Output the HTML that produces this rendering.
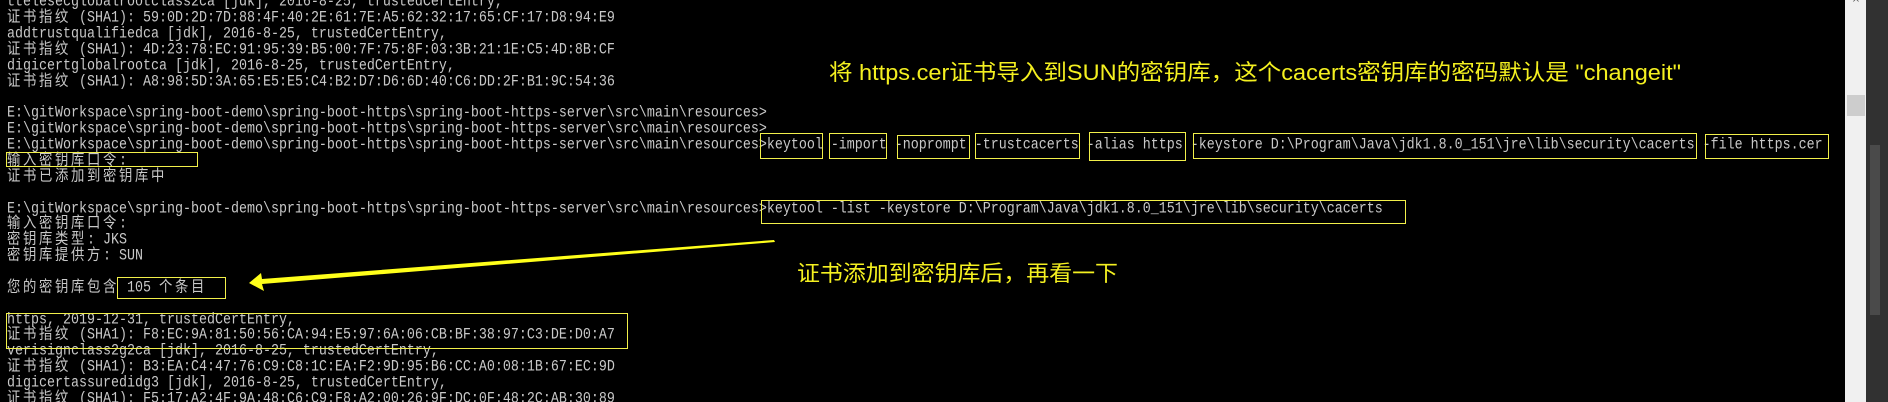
<!DOCTYPE html>
<html><head><meta charset="utf-8"><style>
html,body{margin:0;padding:0;background:#000;width:1888px;height:402px;overflow:hidden;position:relative}
.l{position:absolute;left:7px;height:15.86px;line-height:15.86px;font-family:"Liberation Mono","Noto Sans CJK SC",monospace;font-size:13.33px;color:#c8c8c8;white-space:pre;overflow:visible;transform:scaleY(1.15);transform-origin:50% 50%}
.c{font-family:"Noto Sans CJK SC","WenQuanYi Zen Hei",sans-serif;letter-spacing:2.67px;line-height:0;vertical-align:baseline}
.b{position:absolute;border:1.5px solid #f2f04a;box-sizing:border-box}
</style></head><body>
<div class="l" style="top:-4.6px">ttelesecglobalrootclass2ca [jdk], 2016-8-25, trustedCertEntry,</div>
<div class="l" style="top:11.26px"><span class="c">证书指纹</span> (SHA1): 59:0D:2D:7D:88:4F:40:2E:61:7E:A5:62:32:17:65:CF:17:D8:94:E9</div>
<div class="l" style="top:27.12px">addtrustqualifiedca [jdk], 2016-8-25, trustedCertEntry,</div>
<div class="l" style="top:42.98px"><span class="c">证书指纹</span> (SHA1): 4D:23:78:EC:91:95:39:B5:00:7F:75:8F:03:3B:21:1E:C5:4D:8B:CF</div>
<div class="l" style="top:58.84px">digicertglobalrootca [jdk], 2016-8-25, trustedCertEntry,</div>
<div class="l" style="top:74.7px"><span class="c">证书指纹</span> (SHA1): A8:98:5D:3A:65:E5:E5:C4:B2:D7:D6:6D:40:C6:DD:2F:B1:9C:54:36</div>
<div class="l" style="top:106.42px">E:\gitWorkspace\spring-boot-demo\spring-boot-https\spring-boot-https-server\src\main\resources&gt;</div>
<div class="l" style="top:122.28px">E:\gitWorkspace\spring-boot-demo\spring-boot-https\spring-boot-https-server\src\main\resources&gt;</div>
<div class="l" style="top:138.14px">E:\gitWorkspace\spring-boot-demo\spring-boot-https\spring-boot-https-server\src\main\resources&gt;keytool -import -noprompt -trustcacerts -alias https -keystore D:\Program\Java\jdk1.8.0_151\jre\lib\security\cacerts -file https.cer</div>
<div class="l" style="top:154px"><span class="c">输入密钥库口令</span>:</div>
<div class="l" style="top:169.86px"><span class="c">证书已添加到密钥库中</span></div>
<div class="l" style="top:201.58px">E:\gitWorkspace\spring-boot-demo\spring-boot-https\spring-boot-https-server\src\main\resources&gt;keytool -list -keystore D:\Program\Java\jdk1.8.0_151\jre\lib\security\cacerts</div>
<div class="l" style="top:217.44px"><span class="c">输入密钥库口令</span>:</div>
<div class="l" style="top:233.3px"><span class="c">密钥库类型</span>: JKS</div>
<div class="l" style="top:249.16px"><span class="c">密钥库提供方</span>: SUN</div>
<div class="l" style="top:280.88px"><span class="c">您的密钥库包含</span> 105 <span class="c">个条目</span></div>
<div class="l" style="top:312.6px">https, 2019-12-31, trustedCertEntry,</div>
<div class="l" style="top:328.46px"><span class="c">证书指纹</span> (SHA1): F8:EC:9A:81:50:56:CA:94:E5:97:6A:06:CB:BF:38:97:C3:DE:D0:A7</div>
<div class="l" style="top:344.32px">verisignclass2g2ca [jdk], 2016-8-25, trustedCertEntry,</div>
<div class="l" style="top:360.18px"><span class="c">证书指纹</span> (SHA1): B3:EA:C4:47:76:C9:C8:1C:EA:F2:9D:95:B6:CC:A0:08:1B:67:EC:9D</div>
<div class="l" style="top:376.04px">digicertassuredidg3 [jdk], 2016-8-25, trustedCertEntry,</div>
<div class="l" style="top:391.9px"><span class="c">证书指纹</span> (SHA1): F5:17:A2:4F:9A:48:C6:C9:F8:A2:00:26:9F:DC:0F:48:2C:AB:30:89</div>

<div class="b" style="left:760px;top:133px;width:63px;height:26px"></div>
<div class="b" style="left:829px;top:133px;width:58px;height:26px"></div>
<div class="b" style="left:897px;top:135px;width:73px;height:24px"></div>
<div class="b" style="left:975px;top:133px;width:105px;height:26px"></div>
<div class="b" style="left:1089px;top:132px;width:97px;height:29px"></div>
<div class="b" style="left:1193px;top:133px;width:504px;height:26px"></div>
<div class="b" style="left:1705px;top:134px;width:124px;height:25px"></div>
<div class="b" style="left:761px;top:200px;width:645px;height:24px"></div>
<div class="b" style="left:6px;top:152px;width:192px;height:15px"></div>
<div class="b" style="left:117px;top:277px;width:109px;height:22px"></div>
<div class="b" style="left:6px;top:313px;width:622px;height:36px"></div>

<svg style="position:absolute;left:0;top:0" width="1888" height="402">
<polygon points="774,240 775,242 262,284 264,291 249,283 261,273 262,279" fill="#ffff1a"/>
<text x="829" y="80" textLength="852" lengthAdjust="spacingAndGlyphs" font-family="Liberation Sans, Noto Sans CJK SC, sans-serif" font-size="22" fill="#f4f020">将 https.cer证书导入到SUN的密钥库，这个cacerts密钥库的密码默认是 "changeit"</text>
<text x="797" y="281" textLength="321" lengthAdjust="spacingAndGlyphs" font-family="Noto Sans CJK SC, sans-serif" font-size="22" fill="#f4f020">证书添加到密钥库后，再看一下</text>
</svg>

<div style="position:absolute;left:1845px;top:0;width:21px;height:402px;background:#f0f0f0"></div>
<div style="position:absolute;left:1847px;top:95px;width:18px;height:21px;background:#cdcdcd"></div>
<div style="position:absolute;left:1850px;top:0;width:12px;height:8px;font:10px 'DejaVu Sans',sans-serif;color:#555;line-height:8px;text-align:center">^</div>
<div style="position:absolute;left:1866px;top:0;width:22px;height:402px;background:#313131"></div>
<div style="position:absolute;left:1870px;top:145px;width:10px;height:170px;background:#4a4a4a"></div>
</body></html>
